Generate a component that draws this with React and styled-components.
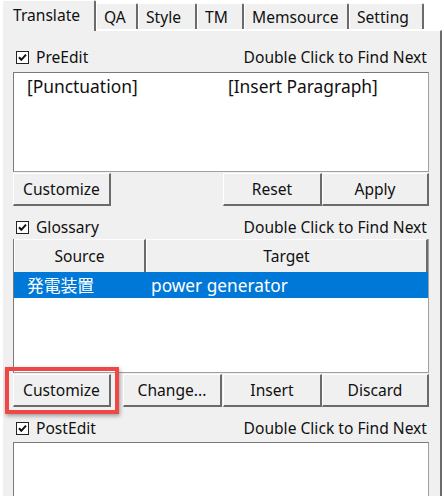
import React from "react";
import styled, { createGlobalStyle } from "styled-components";

const GlobalStyle = createGlobalStyle`
  html, body {
    margin: 0;
    padding: 0;
    background: #ffffff;
  }
  body {
    font-family: "Noto Sans", "Noto Sans CJK JP", sans-serif;
    font-size: 15.6px;
    color: #111111;
    overflow: hidden;
  }
`;

const Window = styled.div`
  width: 444px;
  height: 496px;
  overflow: hidden;
  background: #ffffff;
`;

const TabStrip = styled.div`
  display: flex;
  align-items: flex-end;
  height: 30px;
  padding-left: 2px;
  position: relative;
  z-index: 1;
`;

const Tab = styled.div`
  box-sizing: border-box;
  width: ${(p) => p.$width}px;
  height: ${(p) => (p.$active ? 31 : 26)}px;
  margin-bottom: ${(p) => (p.$active ? -1 : 1)}px;
  align-self: ${(p) => (p.$active ? "flex-start" : "flex-end")};
  display: flex;
  align-items: center;
  padding-left: ${(p) => (p.$active ? 10 : 7)}px;
  padding-bottom: ${(p) => (p.$active ? 3 : 0)}px;
  background: #f0f0f0;
  border-top: 1px solid #ffffff;
  border-left: 1px solid #ffffff;
  border-right: 2px solid #6b6b6b;
  border-top-right-radius: 2px;
  font-size: 15.6px;
  white-space: nowrap;
`;

const Panel = styled.div`
  box-sizing: border-box;
  width: 440px;
  margin-left: 2px;
  height: 470px;
  padding: 16px 11px 0 10px;
  background: #f0f0f0;
  border-top: 1px solid #ffffff;
  border-left: 1px solid #ffffff;
  border-right: 2px solid #6b6b6b;
`;

const SectionHeader = styled.div`
  display: flex;
  align-items: center;
  justify-content: space-between;
  height: 20px;
  margin-bottom: ${(p) => p.$gap}px;
  padding: 0 2px 0 3px;
`;

const CheckLabel = styled.div`
  display: flex;
  align-items: center;
  gap: 7px;
`;

const CheckBox = styled.span`
  box-sizing: border-box;
  width: 13px;
  height: 13px;
  margin-top: 1px;
  background: #ffffff;
  border: 1px solid #222222;
  display: flex;
  align-items: center;
  justify-content: center;
`;

const Hint = styled.span`
  white-space: nowrap;
`;

const TextBox = styled.div`
  box-sizing: border-box;
  height: ${(p) => p.$height}px;
  background: #ffffff;
  border: 1px solid #7a7a7a;
  border-right-color: #a0a0a0;
  border-bottom-color: #a0a0a0;
`;

const PhraseGrid = styled.div`
  display: grid;
  grid-template-columns: 201px 1fr;
  padding: 1px 13px;
  line-height: 24px;
  font-size: 17.4px;
`;

const ButtonRow = styled.div`
  display: grid;
  grid-template-columns: 98px 1fr 99px 107px;
  margin-top: 1px;
  margin-bottom: 11px;
`;

const Button = styled.button`
  box-sizing: border-box;
  position: relative;
  height: 33px;
  margin-left: ${(p) => p.$gapLeft || 0}px;
  margin-right: ${(p) => p.$gapRight || 0}px;
  background: #f0f0f0;
  border: none;
  border-top: 1px solid #ffffff;
  border-left: 1px solid #ffffff;
  border-right: 2px solid #6b6b6b;
  border-bottom: 2px solid #6b6b6b;
  font-family: inherit;
  font-size: 15.6px;
  color: #111111;
  padding: 0;
  visibility: ${(p) => (p.$hidden ? "hidden" : "visible")};
`;

const Highlight = styled.span`
  position: absolute;
  left: -9px;
  right: -10px;
  top: -8px;
  bottom: -9px;
  border: 4px solid #ef4646;
  box-shadow: 1px 2px 4px rgba(0, 0, 0, 0.35);
  pointer-events: none;
`;

const Table = styled.div`
  box-sizing: border-box;
  height: 134px;
  background: #ffffff;
  border: 1px solid #7a7a7a;
  border-top: none;
  border-right-color: #a0a0a0;
  border-bottom-color: #a0a0a0;
`;

const TableRow = styled.div`
  display: grid;
  grid-template-columns: 132px 1fr;
  height: ${(p) => p.$height}px;
  background: ${(p) => (p.$selected ? "#0078d7" : "transparent")};
  color: ${(p) => (p.$selected ? "#ffffff" : "inherit")};
`;

const HeaderCell = styled.div`
  box-sizing: border-box;
  display: flex;
  align-items: center;
  justify-content: center;
  background: #f0f0f0;
  border-top: 1px solid #ffffff;
  border-left: 1px solid #ffffff;
  border-right: 2px solid #6b6b6b;
`;

const Cell = styled.div`
  display: flex;
  align-items: center;
  padding-left: ${(p) => p.$pad}px;
  font-size: ${(p) => p.$size || 17.3}px;
  white-space: nowrap;
`;

function Check() {
  return (
    <CheckBox>
      <svg width="9" height="9" viewBox="0 0 9 9">
        <path d="M1 4.3 L3.3 6.8 L8 1.6" fill="none" stroke="#111" strokeWidth="2" />
      </svg>
    </CheckBox>
  );
}

function Header({ label, gap }) {
  return (
    <SectionHeader $gap={gap}>
      <CheckLabel>
        <Check />
        <span>{label}</span>
      </CheckLabel>
      <Hint>Double Click to Find Next</Hint>
    </SectionHeader>
  );
}

const tabs = [
  { label: "Translate", width: 94, active: true },
  { label: "QA", width: 42 },
  { label: "Style", width: 59 },
  { label: "TM", width: 47 },
  { label: "Memsource", width: 105 },
  { label: "Setting", width: 75 },
];

export default function App() {
  return (
    <Window>
      <GlobalStyle />
      <TabStrip>
        {tabs.map((t) => (
          <Tab key={t.label} $width={t.width} $active={t.active}>
            {t.label}
          </Tab>
        ))}
      </TabStrip>
      <Panel>
        <Header label="PreEdit" gap={5} />
        <TextBox $height={100}>
          <PhraseGrid>
            <span>[Punctuation]</span>
            <span>[Insert Paragraph]</span>
          </PhraseGrid>
        </TextBox>
        <ButtonRow>
          <Button>Customize</Button>
          <Button $hidden>Change...</Button>
          <Button>Reset</Button>
          <Button>Apply</Button>
        </ButtonRow>

        <Header label="Glossary" gap={2} />
        <Table>
          <TableRow $height={33}>
            <HeaderCell>Source</HeaderCell>
            <HeaderCell>Target</HeaderCell>
          </TableRow>
          <TableRow $height={26} $selected>
            <Cell $pad={13} $size={16.8}>発電装置</Cell>
            <Cell $pad={5}>power generator</Cell>
          </TableRow>
        </Table>
        <ButtonRow>
          <Button>
            Customize
            <Highlight />
          </Button>
          <Button $gapLeft={12} $gapRight={1}>Change...</Button>
          <Button>Insert</Button>
          <Button>Discard</Button>
        </ButtonRow>

        <Header label="PostEdit" gap={4} />
        <TextBox $height={100} />
      </Panel>
    </Window>
  );
}
